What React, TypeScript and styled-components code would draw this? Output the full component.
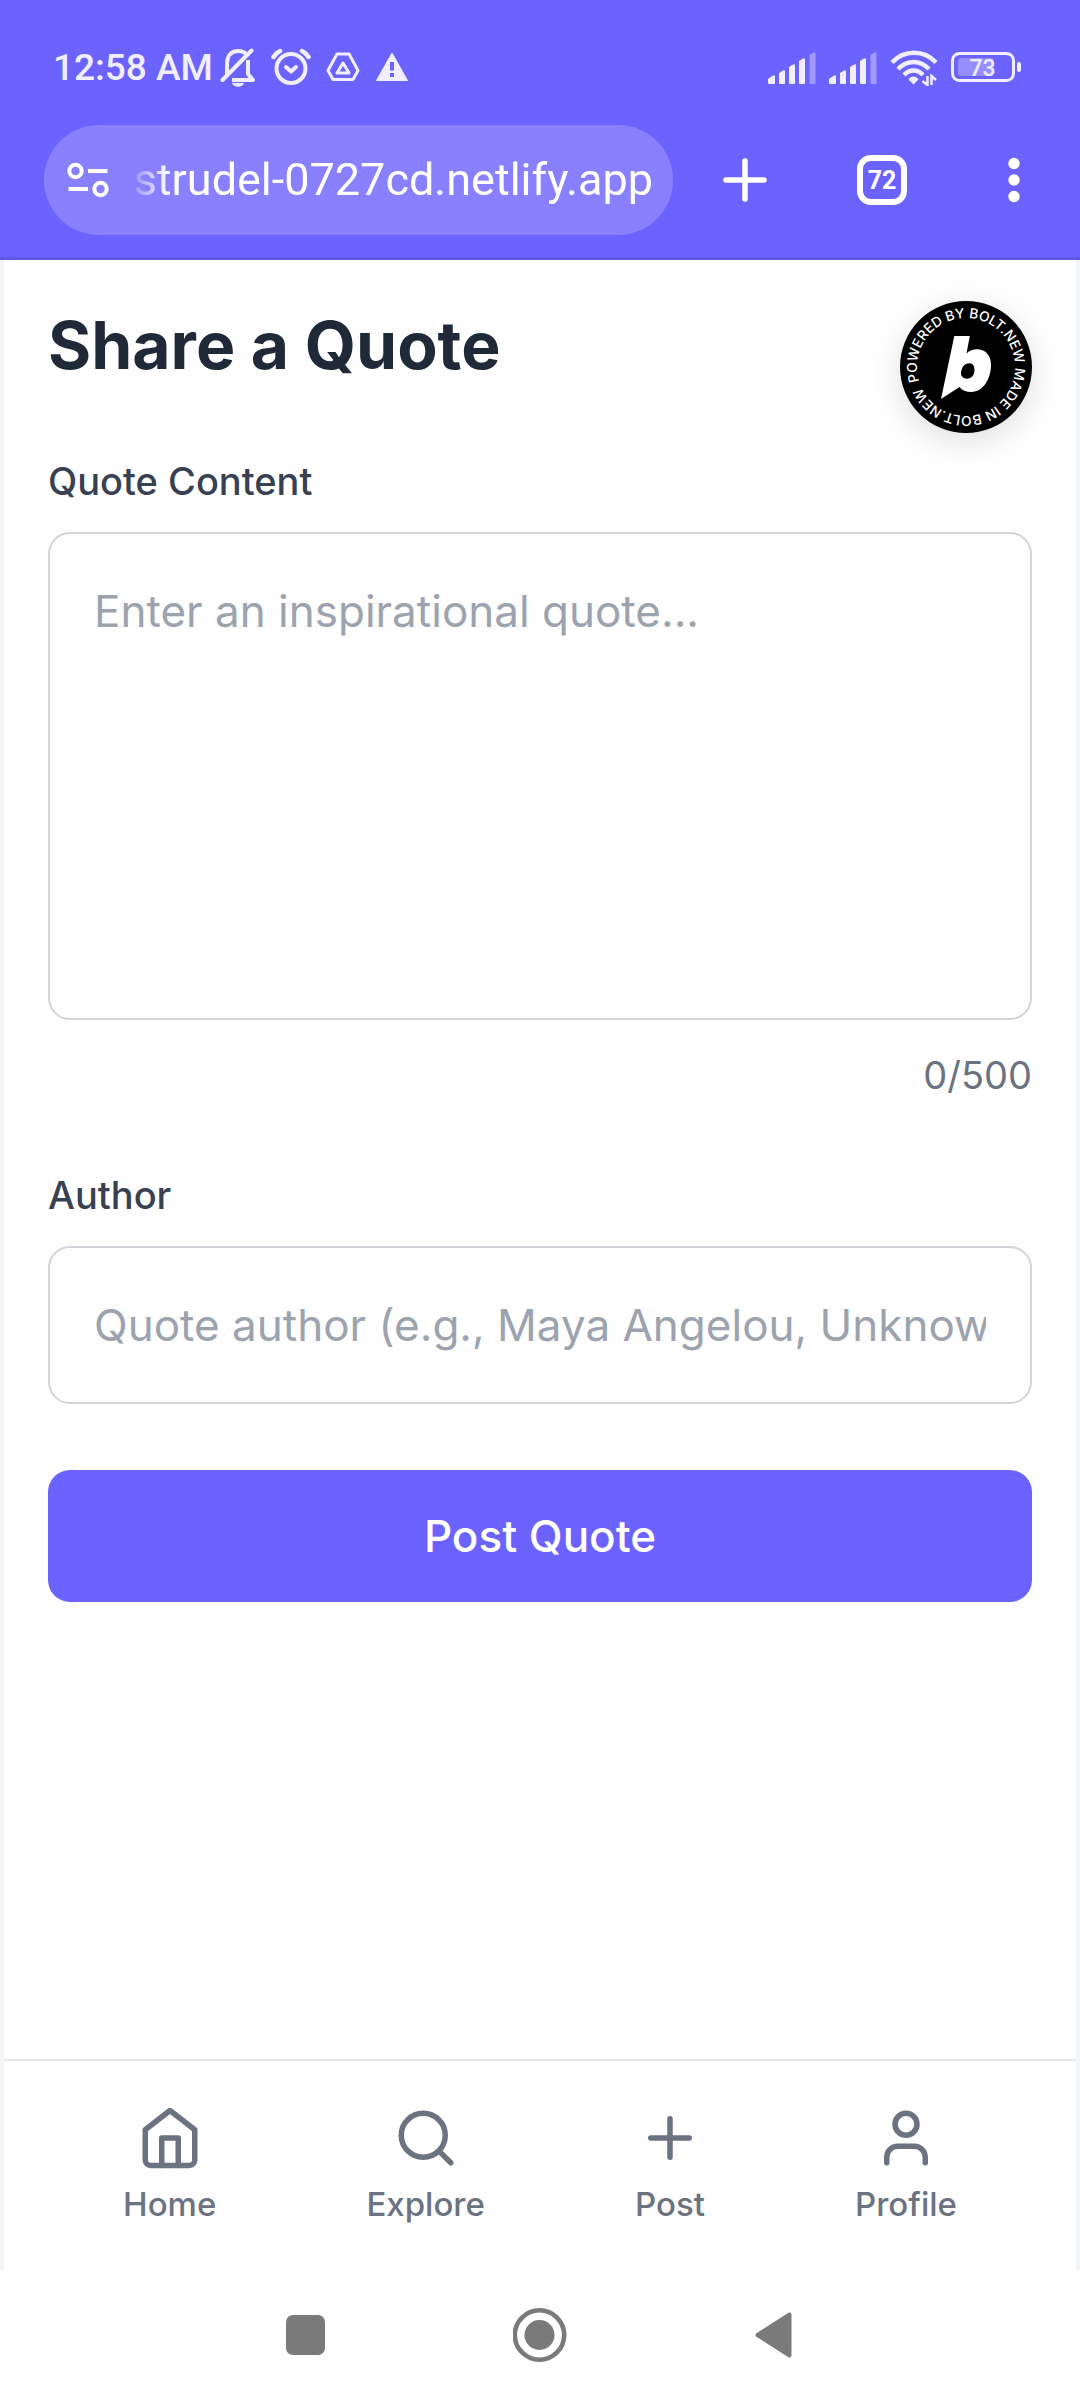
import React, { useState } from "react";
import styled, { createGlobalStyle } from "styled-components";

const GlobalStyle = createGlobalStyle`
  *, *::before, *::after { box-sizing: border-box; }
  body {
    margin: 0;
    background: #fefefe;
    font-family: Inter, "Liberation Sans", sans-serif;
  }
  button, input, textarea { font: inherit; }
  svg { display: block; flex: none; }
`;

const Screen = styled.div`
  min-height: 100vh;
  display: flex;
  flex-direction: column;
`;

/* Browser chrome */

const Chrome = styled.header`
  background: #6c63ff;
  border-bottom: 3px solid #6158e2;
  padding-bottom: 22px;
  color: #fff;
  font-family: Roboto, "Liberation Sans", sans-serif;
`;

const StatusBar = styled.div`
  height: 125px;
  padding: 10px 59px 0 53px;
  display: flex;
  align-items: center;
  justify-content: space-between;
  color: #f0eeff;
`;

const StatusGroup = styled.div<{ $gap: number }>`
  display: flex;
  align-items: center;
  gap: ${(p) => p.$gap}px;
`;

const Clock = styled.time`
  font-size: 37px;
  line-height: 44px;
  font-weight: 500;
  white-space: nowrap;
`;

const Notifications = styled(StatusGroup)`
  margin-left: 7px;
`;

const Toolbar = styled.div`
  display: grid;
  grid-template-columns: minmax(0, 1fr) 136px 138px 126px;
  align-items: center;
  padding: 0 3px 0 44px;
`;

const AddressBar = styled.label`
  height: 110px;
  margin-right: 4px;
  padding: 0 20px 0 23px;
  border-radius: 55px;
  background: #8880ff;
  display: flex;
  align-items: center;
  gap: 22px;
`;

const AddressInput = styled.input`
  flex: 1;
  min-width: 0;
  height: 66px;
  padding: 0;
  border: 0;
  outline: 0;
  background: none;
  color: #fff;
  font-size: 45px;
  line-height: 66px;
  text-align: right;
  mask-image: linear-gradient(to right, rgba(0, 0, 0, 0.1), #000 38px);
`;

const IconButton = styled.button`
  height: 110px;
  padding: 0;
  border: 0;
  background: none;
  color: inherit;
  display: flex;
  align-items: center;
  justify-content: center;
`;

const TabCount = styled.span`
  width: 50px;
  height: 50px;
  border: 6px solid #fff;
  border-radius: 14px;
  display: flex;
  align-items: center;
  justify-content: center;
  font-size: 25px;
  font-weight: 700;
`;

/* Page */

const Page = styled.div`
  flex: 1;
  display: flex;
  flex-direction: column;
  border: solid #f3f4f6;
  border-width: 0 4px;
`;

const Main = styled.main`
  position: relative;
  flex: 1;
  padding: 41px 44px 44px;
`;

const Title = styled.h1`
  margin: 0 0 66px;
  font-size: 66px;
  line-height: 88px;
  font-weight: 700;
  color: #1f2937;
`;

const BoltBadge = styled.a`
  position: absolute;
  top: 41px;
  right: 44px;
  border-radius: 50%;
  box-shadow: 0 8px 32px rgba(0, 0, 0, 0.12);
`;

const Form = styled.form`
  display: flex;
  flex-direction: column;
  gap: 66px;
`;

const Field = styled.div`
  display: flex;
  flex-direction: column;
`;

const Label = styled.label`
  margin-bottom: 24px;
  font-size: 38px;
  line-height: 53px;
  font-weight: 500;
  color: #374151;
`;

const TextInput = styled.input`
  display: block;
  width: 100%;
  height: 158px;
  padding: 44px;
  border: 2px solid #d1d5db;
  border-radius: 22px;
  outline: 0;
  background: transparent;
  color: #1f2937;
  font-size: 44px;
  line-height: 66px;
  resize: none;

  &::placeholder {
    color: #9ca3af;
    opacity: 1;
  }
`;

const TextArea = styled(TextInput)`
  height: auto;
`;

const Counter = styled.output`
  margin-top: 28px;
  font-size: 38px;
  line-height: 55px;
  text-align: right;
  color: #6b7280;
`;

const SubmitButton = styled.button`
  padding: 33px 44px;
  border: 0;
  border-radius: 22px;
  background: #6c63ff;
  color: #fff;
  font-size: 44px;
  line-height: 66px;
  font-weight: 500;
`;

const TabBar = styled.nav`
  padding: 22px 44px;
  border-top: 2px solid #e5e7eb;
  display: flex;
  justify-content: space-around;
`;

const TabLink = styled.a`
  padding: 22px 33px;
  display: flex;
  flex-direction: column;
  align-items: center;
  gap: 11px;
  color: #6b7280;
  font-size: 33px;
  line-height: 44px;
  font-weight: 500;
  text-decoration: none;
`;

const SystemBar = styled.nav`
  width: 65%;
  height: 130px;
  margin: 0 auto;
  display: grid;
  grid-template-columns: repeat(3, 1fr);
  align-items: center;
  color: #7a7a7a;
`;

/* Icons */

const BellOffIcon = () => (
  <svg width="36" height="40" viewBox="0 0 36 40" fill="none" aria-hidden="true">
    <path d="M7 27V16C7 8 11 3 18 3c4 0 7 1.500 9 4M28 12v14l5 6H12" stroke="currentColor" strokeWidth="4" strokeLinejoin="round" />
    <path d="M2.500 32L31.500 2.500" stroke="currentColor" strokeWidth="4" strokeLinecap="round" />
    <path d="M12 35h12c-1.500 5-10.500 5-12 0z" fill="currentColor" />
  </svg>
);

const AlarmIcon = () => (
  <svg width="40" height="40" viewBox="0 0 40 40" fill="none" stroke="currentColor" strokeLinecap="round" strokeLinejoin="round" aria-hidden="true">
    <circle cx="20" cy="20.500" r="14.500" strokeWidth="4" />
    <path d="M15 19l5 4.500 5-4.500" strokeWidth="4" />
    <path d="M2.500 9C4 6.500 6 4.500 9 3M37.500 9C36 6.500 34 4.500 31 3" strokeWidth="4.500" />
  </svg>
);

const DriveIcon = () => (
  <svg width="34" height="32" viewBox="0 0 34 32" fill="none" stroke="currentColor" strokeWidth="3" strokeLinejoin="round" aria-hidden="true">
    <path d="M11 2h12l9 16.500-5 9H7l-5-9z" />
    <path d="M17 11l6 10H11z" />
  </svg>
);

const WarningIcon = () => (
  <svg width="34" height="32" viewBox="0 0 34 32" aria-hidden="true">
    <path d="M17 1l15.500 27.500h-31z" fill="currentColor" stroke="currentColor" strokeLinejoin="round" />
    <path d="M15 10h4v8.500h-4zM15 21h4v4h-4z" fill="#6c63ff" />
  </svg>
);

const SignalIcon = () => (
  <svg width="48" height="32" viewBox="0 0 48 32" fill="currentColor" aria-hidden="true">
    <path d="M0 27l5-3.500h2V31q0 1-1 1H1q-1 0-1-1z" />
    <path d="M11 21l4-2.500h2V31q0 1-1 1h-4q-1 0-1-1z" />
    <path d="M21 15l4-2.500h2V31q0 1-1 1h-4q-1 0-1-1z" />
    <path d="M31 9l4-2.500h2V31q0 1-1 1h-4q-1 0-1-1z" />
    <path d="M41.500 3l4-2.500h2V31q0 1-1 1h-4q-1 0-1-1z" opacity="0.4" />
  </svg>
);

const WifiIcon = () => (
  <svg width="48" height="36" viewBox="0 0 48 36" fill="none" stroke="currentColor" aria-hidden="true">
    <path d="M2 12.500C14-.500 34-.500 46 12.500" strokeWidth="4.500" />
    <path d="M8 19c9-9.500 22-9.500 31 0" strokeWidth="4.500" />
    <path d="M14 25c5.500-6 13.500-6 19 0" strokeWidth="4.500" />
    <path d="M18.500 29.500c2-4 8-4 10 0L23.500 34.500z" fill="currentColor" stroke="none" />
    <path d="M37.500 26v9l-5-4M41.500 35v-9l4.500 4" strokeWidth="2.500" />
  </svg>
);

const BatteryIcon = () => (
  <svg width="70" height="32" viewBox="0 0 70 32" aria-hidden="true">
    <rect x="1.500" y="1.500" width="61" height="27" rx="7" fill="none" stroke="currentColor" strokeWidth="3" />
    <rect x="7" y="6" width="36" height="18" rx="3" fill="#958eff" />
    <rect x="66" y="10" width="4" height="10" rx="2" fill="currentColor" />
    <text x="31.500" y="23.500" fontSize="23" fontWeight="500" textAnchor="middle" fill="currentColor">73</text>
  </svg>
);

const SiteSettingsIcon = () => (
  <svg width="42" height="36" viewBox="0 0 42 36" fill="none" stroke="#fff" strokeWidth="4" aria-hidden="true">
    <circle cx="8.500" cy="9" r="6.200" />
    <path d="M21 9h19.500M1.500 27H21" />
    <circle cx="33.500" cy="27" r="6.200" />
  </svg>
);

const NewTabIcon = () => (
  <svg width="44" height="44" viewBox="0 0 44 44" fill="none" stroke="currentColor" strokeWidth="5.500" strokeLinecap="round" aria-hidden="true">
    <path d="M22 3v38M3 22h38" />
  </svg>
);

const MoreIcon = () => (
  <svg width="12" height="46" viewBox="0 0 12 46" fill="currentColor" aria-hidden="true">
    <circle cx="6" cy="6.500" r="5.700" />
    <circle cx="6" cy="23" r="5.700" />
    <circle cx="6" cy="39.500" r="5.700" />
  </svg>
);

const TabIcon = ({ children }: { children: React.ReactNode }) => (
  <svg width="66" height="66" viewBox="0 0 24 24" fill="none" stroke="currentColor" strokeWidth="2" strokeLinecap="round" strokeLinejoin="round" aria-hidden="true">
    {children}
  </svg>
);

const BoltLogo = () => (
  <svg width="132" height="132" viewBox="0 0 132 132" role="img" aria-label="Powered by Bolt.new">
    <circle cx="66" cy="66" r="66" fill="#000" />
    <path id="bolt-ring" d="M17 66a49 49 0 0 1 98 0a49 49 0 0 1-98 0" fill="none" transform="rotate(-17 66 66)" />
    <text fill="#fff" fontFamily="Inter, sans-serif" fontSize="13.700" fontWeight="500">
      <textPath href="#bolt-ring">POWERED BY BOLT.NEW MADE IN BOLT.NEW</textPath>
    </text>
    <path
      fill="#fff"
      fillRule="evenodd"
      d="M54.300 35h15.500l-3.300 17.500c3-3 6.500-4.200 10.500-4.200 9 0 14 6.500 14 15.500C91 78 83 91 71.500 91c-5.500 0-9.500-1.500-12-5L41 98zM69.500 62.300c-4.500 0-7.500 3-8.500 9.200-.500 3.500 2.500 6.200 6 6.200 4.500 0 7.500-4 7.500-8.500 0-4-1.500-6.900-5-6.900z"
    />
  </svg>
);

const tabs = [
  {
    label: "Home",
    icon: (
      <>
        <path d="m3 9 9-7 9 7v11a2 2 0 0 1-2 2H5a2 2 0 0 1-2-2z" />
        <path d="M9 22V12h6v10" />
      </>
    ),
  },
  {
    label: "Explore",
    icon: (
      <>
        <circle cx="11" cy="11" r="8" />
        <path d="m21 21-4.300-4.300" />
      </>
    ),
  },
  { label: "Post", icon: <path d="M5 12h14M12 5v14" /> },
  {
    label: "Profile",
    icon: (
      <>
        <path d="M19 21v-2a4 4 0 0 0-4-4H9a4 4 0 0 0-4 4v2" />
        <circle cx="12" cy="7" r="4" />
      </>
    ),
  },
];

const MAX_LENGTH = 500;

export default function App() {
  const [quote, setQuote] = useState("");
  const [author, setAuthor] = useState("");

  return (
    <Screen>
      <GlobalStyle />
      <Chrome>
        <StatusBar>
          <StatusGroup $gap={0}>
            <Clock>12:58 AM</Clock>
            <Notifications $gap={15}>
              <BellOffIcon />
              <AlarmIcon />
              <DriveIcon />
              <WarningIcon />
            </Notifications>
          </StatusGroup>
          <StatusGroup $gap={13}>
            <SignalIcon />
            <SignalIcon />
            <WifiIcon />
            <BatteryIcon />
          </StatusGroup>
        </StatusBar>
        <Toolbar>
          <AddressBar>
            <SiteSettingsIcon />
            <AddressInput type="text" aria-label="Address" defaultValue="strudel-0727cd.netlify.app" />
          </AddressBar>
          <IconButton type="button" aria-label="New tab">
            <NewTabIcon />
          </IconButton>
          <IconButton type="button" aria-label="Open tabs">
            <TabCount>72</TabCount>
          </IconButton>
          <IconButton type="button" aria-label="More options">
            <MoreIcon />
          </IconButton>
        </Toolbar>
      </Chrome>

      <Page>
        <Main>
          <Title>Share a Quote</Title>
          <BoltBadge href="#bolt">
            <BoltLogo />
          </BoltBadge>
          <Form onSubmit={(e) => e.preventDefault()}>
            <Field>
              <Label htmlFor="quote">Quote Content</Label>
              <TextArea
                as="textarea"
                id="quote"
                rows={6}
                maxLength={MAX_LENGTH}
                placeholder="Enter an inspirational quote..."
                value={quote}
                onChange={(e: React.ChangeEvent<any>) => setQuote(e.target.value)}
              />
              <Counter htmlFor="quote">
                {quote.length}/{MAX_LENGTH}
              </Counter>
            </Field>
            <Field>
              <Label htmlFor="author">Author</Label>
              <TextInput
                id="author"
                type="text"
                placeholder="Quote author (e.g., Maya Angelou, Unknown)"
                value={author}
                onChange={(e) => setAuthor(e.target.value)}
              />
            </Field>
            <SubmitButton type="submit">Post Quote</SubmitButton>
          </Form>
        </Main>
        <TabBar aria-label="Sections">
          {tabs.map((tab) => (
            <TabLink key={tab.label} href={`#${tab.label.toLowerCase()}`}>
              <TabIcon>{tab.icon}</TabIcon>
              {tab.label}
            </TabLink>
          ))}
        </TabBar>
      </Page>

      <SystemBar aria-label="System">
        <IconButton type="button" aria-label="Recent apps">
          <svg width="40" height="40" viewBox="0 0 40 40" fill="currentColor" aria-hidden="true">
            <rect width="39" height="40" rx="7" />
          </svg>
        </IconButton>
        <IconButton type="button" aria-label="Home screen">
          <svg width="54" height="54" viewBox="0 0 54 54" aria-hidden="true">
            <circle cx="26.500" cy="27" r="24.700" fill="none" stroke="currentColor" strokeWidth="4.600" />
            <circle cx="26.500" cy="27" r="15" fill="currentColor" />
          </svg>
        </IconButton>
        <IconButton type="button" aria-label="Back">
          <svg width="38" height="46" viewBox="0 0 38 46" fill="currentColor" stroke="currentColor" strokeWidth="4" strokeLinejoin="round" aria-hidden="true">
            <path d="M34.500 2.500v41L2.500 23z" />
          </svg>
        </IconButton>
      </SystemBar>
    </Screen>
  );
}
